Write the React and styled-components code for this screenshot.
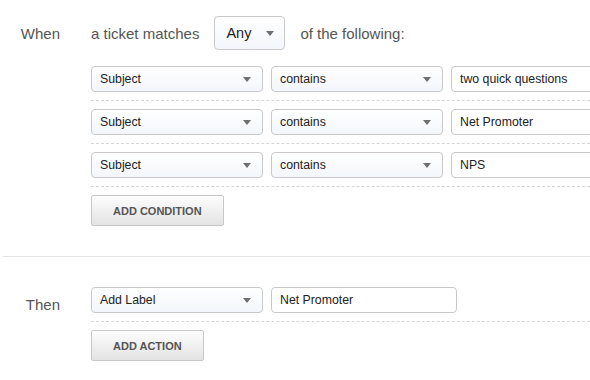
import React from "react";
import styled, { createGlobalStyle } from "styled-components";

const Global = createGlobalStyle`
  html, body { margin: 0; padding: 0; background: #fff; overflow: hidden; }
  body { font-family: "Liberation Sans", Arial, Helvetica, sans-serif; color: #333; }
  * { box-sizing: border-box; }
`;

const Page = styled.div`
  width: 590px;
  padding-left: 3px;
  overflow: hidden;
`;

const Section = styled.section`
  display: flex;
  gap: 31px;
  padding: ${(p) => (p.$first ? "16px 0 30px" : "30px 0 0")};
  border-bottom: ${(p) => (p.$first ? "1px solid #e4e4e4" : "none")};
`;

const Label = styled.div`
  width: 57px;
  flex-shrink: 0;
  text-align: right;
  font-size: 15px;
  line-height: 20px;
  padding-top: 8px;
  color: #555;
`;

const Content = styled.div`
  flex: 1;
  min-width: 0;
  display: flex;
  flex-direction: column;
  align-items: flex-start;
`;

const Header = styled.div`
  display: flex;
  align-items: center;
  gap: 15px;
  font-size: 15px;
  color: #555;
  margin-bottom: 16px;
  white-space: nowrap;
`;

const RowList = styled.div`
  align-self: stretch;
  display: flex;
  flex-direction: column;
  overflow: hidden;
`;

const Row = styled.div`
  display: flex;
  gap: 8px;
  padding-bottom: 8px;
  margin-bottom: 8px;
  border-bottom: 1px dashed #d6d6d6;
`;

const SelectBox = styled.div`
  position: relative;
  flex-shrink: 0;
  width: ${(p) => p.$w}px;
  height: ${(p) => p.$h || 26}px;
  border: 1px solid #c9c9c9;
  border-radius: 4px;
  background: linear-gradient(#ffffff, #f3f6fb);
  display: flex;
  align-items: center;
  padding-left: ${(p) => p.$pl || 8}px;
  font-size: ${(p) => p.$fs || 12.3}px;
  color: #222;
  white-space: nowrap;
`;

const Arrow = styled.span`
  position: absolute;
  right: ${(p) => p.$r || 11}px;
  top: 50%;
  margin-top: -2px;
  width: 0;
  height: 0;
  border-left: 4.5px solid transparent;
  border-right: 4.5px solid transparent;
  border-top: 5px solid #6f6f6f;
`;

const TextInput = styled.div`
  flex-shrink: 0;
  width: 186px;
  height: 26px;
  border: 1px solid #c9c9c9;
  border-radius: 4px;
  background: #fff;
  display: flex;
  align-items: center;
  padding-left: 8px;
  font-size: 12.3px;
  color: #222;
  white-space: nowrap;
`;

const Button = styled.button`
  height: 31px;
  padding: 0 21px;
  border: 1px solid #c8c8c8;
  border-radius: 2px;
  background: linear-gradient(#fdfdfd, #e3e3e3);
  font-family: "Liberation Sans", Arial, sans-serif;
  font-weight: bold;
  font-size: 11px;
  color: #555;
  cursor: pointer;
  white-space: nowrap;
`;

const Select = ({ w, h, pl, fs, r, children }) => (
  <SelectBox $w={w} $h={h} $pl={pl} $fs={fs}>
    {children}
    <Arrow $r={r} />
  </SelectBox>
);

const conditions = ["two quick questions", "Net Promoter", "NPS"];

export default function App() {
  return (
    <>
      <Global />
      <Page>
        <Section $first>
          <Label>When</Label>
          <Content>
            <Header>
              <span>a ticket matches</span>
              <Select w={71} h={34} pl={11} fs={14.5} r={10}>Any</Select>
              <span>of the following:</span>
            </Header>
            <RowList>
              {conditions.map((c) => (
                <Row key={c}>
                  <Select w={172}>Subject</Select>
                  <Select w={172}>contains</Select>
                  <TextInput>{c}</TextInput>
                </Row>
              ))}
            </RowList>
            <Button>ADD CONDITION</Button>
          </Content>
        </Section>
        <Section>
          <Label>Then</Label>
          <Content>
            <RowList>
              <Row>
                <Select w={172}>Add Label</Select>
                <TextInput>Net Promoter</TextInput>
              </Row>
            </RowList>
            <Button>ADD ACTION</Button>
          </Content>
        </Section>
      </Page>
    </>
  );
}
